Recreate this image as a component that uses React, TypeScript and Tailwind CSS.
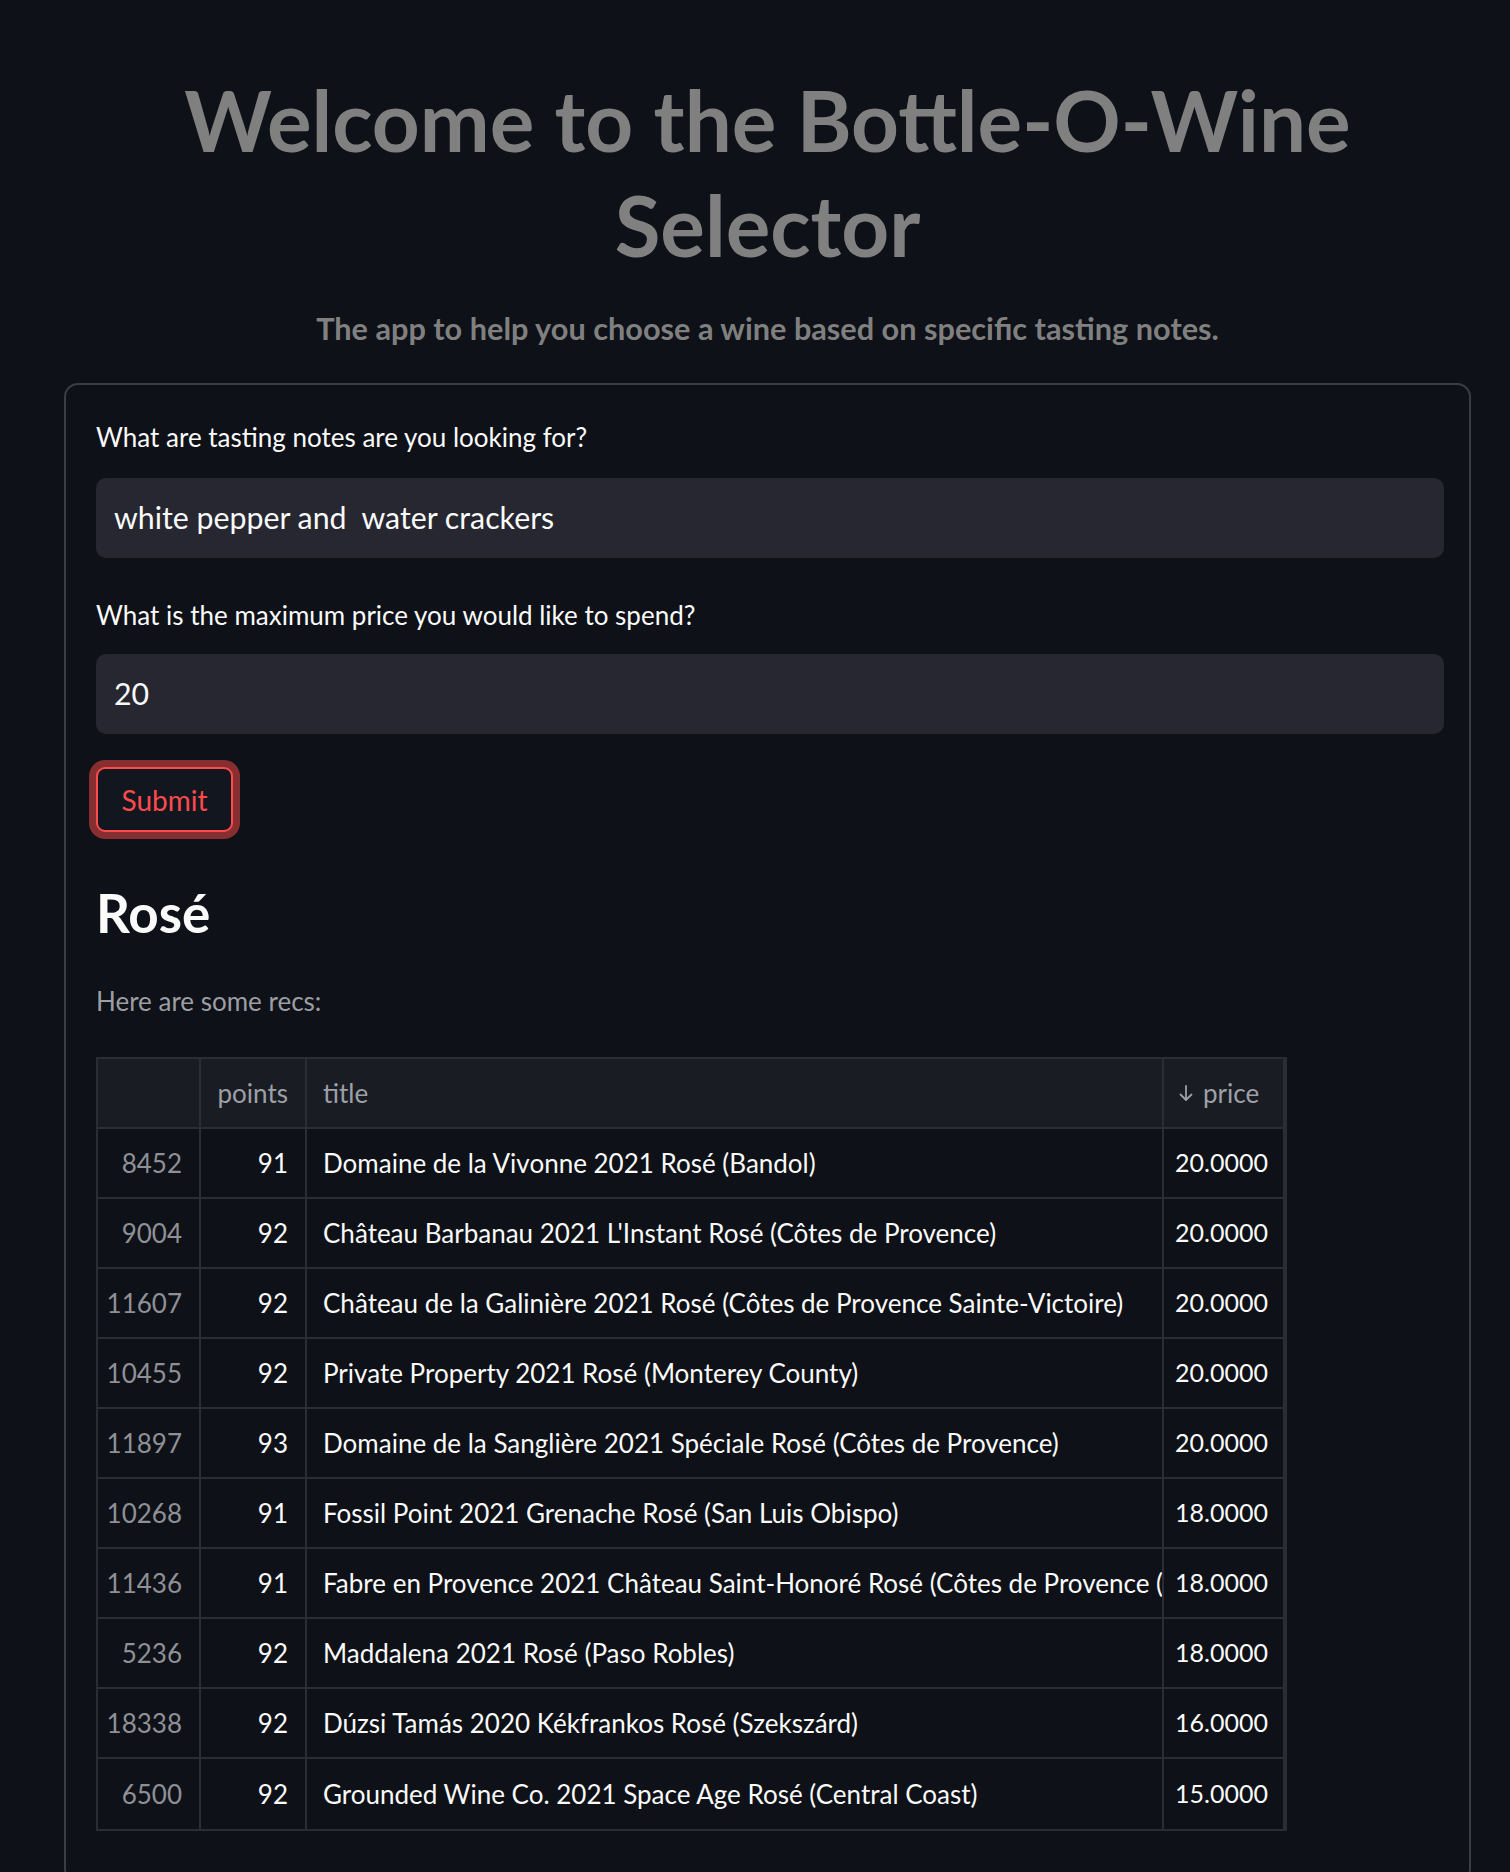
import React from 'react'

const rows = [
  { id: '8452', points: '91', title: 'Domaine de la Vivonne 2021 Rosé (Bandol)', price: '20.0000' },
  { id: '9004', points: '92', title: "Château Barbanau 2021 L'Instant Rosé (Côtes de Provence)", price: '20.0000' },
  { id: '11607', points: '92', title: 'Château de la Galinière 2021 Rosé (Côtes de Provence Sainte-Victoire)', price: '20.0000' },
  { id: '10455', points: '92', title: 'Private Property 2021 Rosé (Monterey County)', price: '20.0000' },
  { id: '11897', points: '93', title: 'Domaine de la Sanglière 2021 Spéciale Rosé (Côtes de Provence)', price: '20.0000' },
  { id: '10268', points: '91', title: 'Fossil Point 2021 Grenache Rosé (San Luis Obispo)', price: '18.0000' },
  { id: '11436', points: '91', title: 'Fabre en Provence 2021 Château Saint-Honoré Rosé (Côtes de Provence (Côtes de Provence)', price: '18.0000' },
  { id: '5236', points: '92', title: 'Maddalena 2021 Rosé (Paso Robles)', price: '18.0000' },
  { id: '18338', points: '92', title: 'Dúzsi Tamás 2020 Kékfrankos Rosé (Szekszárd)', price: '16.0000' },
  { id: '6500', points: '92', title: 'Grounded Wine Co. 2021 Space Age Rosé (Central Coast)', price: '15.0000' },
]

const grid = 'grid grid-cols-[103px_106px_857px_121px]'

function SortArrow() {
  return (
    <svg width="16" height="17" viewBox="0 0 16 17" fill="none" className="mr-[9px]">
      <path d="M8 1v14M2.5 9.5 8 15l5.5-5.5" stroke="#9da0a6" strokeWidth="1.8" strokeLinecap="round" strokeLinejoin="round" />
    </svg>
  )
}

export default function App() {
  return (
    <div
      className="min-h-screen bg-[#0e1117] pb-[40px] text-[#fafafa]"
      style={{ fontFamily: 'Lato, "Open Sans", sans-serif' }}
    >
      <div className="ml-[64px] w-[1407px]">
        {/* heading */}
        <h1 className="pt-[68px] text-center text-[83.5px] font-bold leading-[105px] text-[#808080]">
          <span className="whitespace-nowrap">Welcome to the Bottle-O-Wine</span>
          <br />
          Selector
        </h1>
        <h5 className="mt-[31px] text-center text-[30.7px] font-bold leading-[40px] text-[#808080]">
          The app to help you choose a wine based on specific tasting notes.
        </h5>

        {/* form */}
        <div className="mt-[34px] h-[1500px] rounded-[14px] border-2 border-[#3b3d44] pl-[30px] pr-[25px] pt-[34px]">
          <label className="block text-[26px] leading-[36px]">What are tasting notes are you looking for?</label>
          <div className="mt-[23px] flex h-[80px] items-center rounded-[10px] bg-[#262730] px-[18px] text-[30.3px] whitespace-pre">
            white pepper and  water crackers
          </div>

          <label className="mt-[39px] block text-[26px] leading-[36px]">What is the maximum price you would like to spend?</label>
          <div className="mt-[21px] flex h-[80px] items-center rounded-[10px] bg-[#262730] px-[18px] text-[30.3px]">
            20
          </div>

          <button className="mt-[33px] flex h-[65px] w-[137px] items-center justify-center rounded-[9px] border-2 border-[#ff4b4b] bg-[#12161f] text-[28px] text-[#ff4b4b] shadow-[0_0_0_7px_rgba(255,75,75,0.5)]">
            Submit
          </button>

          {/* results */}
          <h3 className="mt-[49px] text-[53px] font-bold leading-[64px]">Rosé</h3>
          <p className="mt-[36px] text-[26px] leading-[40px] text-[#9c9ea3]">Here are some recs:</p>

          <div className="mt-[36px] w-[1191px] border-2 border-r-4 border-[#2b2d35] text-[26px]">
            <div className={`${grid} h-[70px] border-b-2 border-[#2b2d35] bg-[#1a1c23] text-[#9da0a6]`}>
              <div className="border-r-2 border-[#2b2d35]" />
              <div className="flex items-center justify-end border-r-2 border-[#2b2d35] pr-[17px]">points</div>
              <div className="flex items-center border-r-2 border-[#2b2d35] pl-[16px]">title</div>
              <div className="flex items-center pl-[14px]">
                <SortArrow />
                price
              </div>
            </div>
            {rows.map((r, i) => (
              <div
                key={r.id}
                className={`${grid} h-[70px] ${i < rows.length - 1 ? 'border-b-2' : ''} border-[#2b2d35]`}
              >
                <div className="flex items-center justify-end border-r-2 border-[#2b2d35] pr-[17px] text-[#8e9096]">
                  {r.id}
                </div>
                <div className="flex items-center justify-end border-r-2 border-[#2b2d35] pr-[17px]">{r.points}</div>
                <div className="flex items-center overflow-hidden whitespace-nowrap border-r-2 border-[#2b2d35] pl-[16px]">
                  {r.title}
                </div>
                <div className="flex items-center justify-end pr-[17px] text-[25px]">{r.price}</div>
              </div>
            ))}
          </div>
        </div>
      </div>
    </div>
  )
}
